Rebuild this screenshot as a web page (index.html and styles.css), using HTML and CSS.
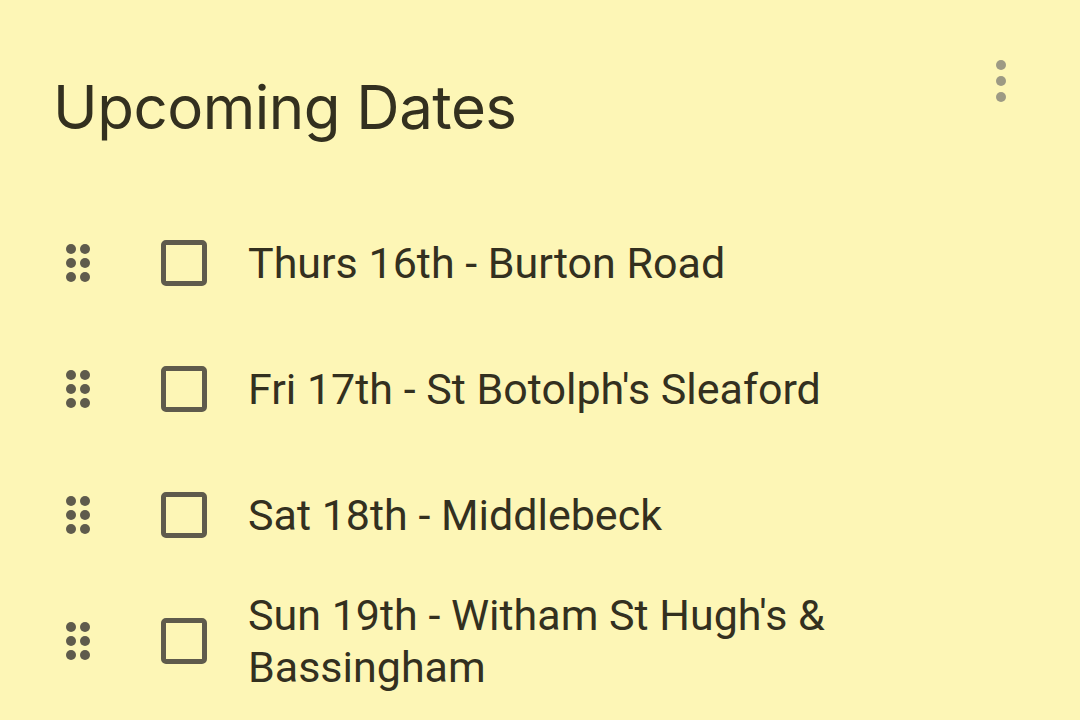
FILE: index.html
```html
<!DOCTYPE html>
<html lang="en">
<head>
    <meta charset="UTF-8" />
    <title>Upcoming Dates</title>
    <link rel="stylesheet" href="styles.css">
</head>
<body>
    <div class="note">
        <div class="note-header">
            <h1 class="note-title">Upcoming Dates</h1>
            <button class="more-btn" aria-label="More">
                <span class="dot"></span>
                <span class="dot"></span>
                <span class="dot"></span>
            </button>
        </div>

        <ul class="checklist">
            <li class="item">
                <span class="handle"><i></i><i></i><i></i><i></i><i></i><i></i></span>
                <span class="box"></span>
                <span class="label">Thurs 16th - Burton Road</span>
            </li>
            <li class="item">
                <span class="handle"><i></i><i></i><i></i><i></i><i></i><i></i></span>
                <span class="box"></span>
                <span class="label">Fri 17th - St Botolph's Sleaford</span>
            </li>
            <li class="item">
                <span class="handle"><i></i><i></i><i></i><i></i><i></i><i></i></span>
                <span class="box"></span>
                <span class="label">Sat 18th - Middlebeck</span>
            </li>
            <li class="item">
                <span class="handle"><i></i><i></i><i></i><i></i><i></i><i></i></span>
                <span class="box"></span>
                <span class="label">Sun 19th - Witham St Hugh's &amp; Bassingham</span>
            </li>
        </ul>
    </div>
</body>
</html>
```

FILE: styles.css
```css
html, body {
    margin: 0;
    padding: 0;
    height: 100%;
    background: #fdf6b6;
    color: #33301f;
    font-family: 'Roboto', sans-serif;
    overflow: hidden;
}

.note {
    padding: 0 0 0 53px;
}

.note-header {
    display: flex;
    justify-content: space-between;
    align-items: flex-start;
    padding-right: 74px;
}

.note-title {
    margin: 72px 0 0;
    font-family: 'Inter', sans-serif;
    font-weight: 400;
    font-size: 60px;
    line-height: 70px;
    letter-spacing: -0.5px;
}

.more-btn {
    margin-top: 60px;
    padding: 0;
    border: none;
    background: none;
    display: flex;
    flex-direction: column;
    gap: 6px;
}

.more-btn .dot {
    width: 10px;
    height: 10px;
    border-radius: 50%;
    background: #9d9a84;
}

.checklist {
    list-style: none;
    margin: 58px 0 0;
    padding: 0;
}

.item {
    display: flex;
    align-items: center;
    min-height: 126px;
}

.handle {
    margin-left: 13px;
    width: 26px;
    display: grid;
    grid-template-columns: 10px 10px;
    column-gap: 4px;
    row-gap: 4px;
}

.handle i {
    width: 10px;
    height: 10px;
    border-radius: 50%;
    background: #5f5b4c;
}

.box {
    margin-left: 69px;
    width: 36px;
    height: 36px;
    border: 5px solid #5f5b4c;
    border-radius: 5px;
    flex-shrink: 0;
}

.label {
    margin-left: 41px;
    width: 620px;
    font-size: 43px;
    line-height: 52px;
}
```
